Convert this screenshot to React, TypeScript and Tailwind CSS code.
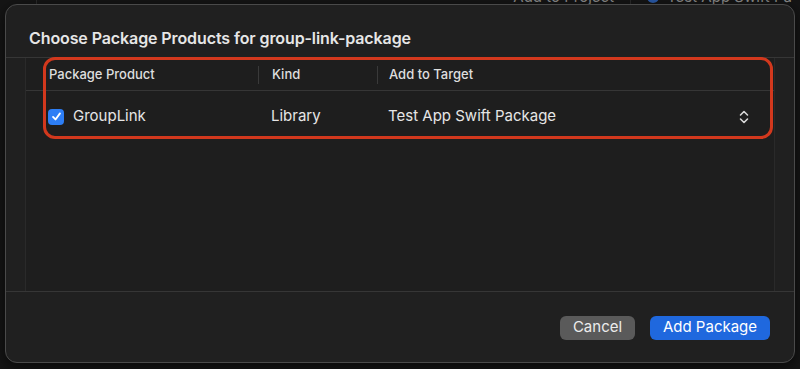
import React from 'react';

const font = { fontFamily: 'Inter, "Noto Sans", "Liberation Sans", sans-serif' };

const UpDownChevron = () => (
    <svg width="10" height="14" viewBox="0 0 10 14" fill="none" stroke="#d8d8d8" strokeWidth="1.6" strokeLinecap="round" strokeLinejoin="round">
        <path d="M1.5 5 L5 1.5 L8.5 5" />
        <path d="M1.5 9 L5 12.5 L8.5 9" />
    </svg>
);

const Checkbox = () => (
    <span className="flex h-4 w-4 items-center justify-center rounded-[4px] bg-[#2d7ef5]">
        <svg width="11" height="11" viewBox="0 0 12 12" fill="none" stroke="white" strokeWidth="2" strokeLinecap="round" strokeLinejoin="round">
            <path d="M2.2 6.4 L4.9 9.2 L9.8 2.6" />
        </svg>
    </span>
);

export default function App() {
    return (
        <div className="relative h-[369px] w-[800px] overflow-hidden bg-[#151515]" style={font}>
            {/* window content peeking behind the sheet */}
            <div className="absolute left-0 top-0 flex h-[6px] w-full overflow-hidden text-[15px] text-[#8a8a8a]">
                <div className="w-[37px] border-r border-[#2a2a2a]" />
                <div className="ml-auto flex items-center gap-4 -mt-[12px] pr-2">
                    <span className="border-r border-[#2a2a2a] pr-4">Add to Project</span>
                    <span className="flex items-center gap-2">
                        <span className="h-3 w-3 rounded-full bg-[#2a5aa8]" />
                        Test App Swift Pa
                    </span>
                </div>
            </div>

            <div className="relative px-[5px] pt-[4px]">
                <div className="flex h-[359px] flex-col rounded-[12px] border border-[#4a4a4a] bg-[#202020] shadow-[0_4px_14px_rgba(0,0,0,0.6)]">
                    <div className="flex h-[52px] items-end pb-[7px] pl-[23px]">
                        <h1 className="text-[16px] font-semibold tracking-[-0.1px] text-[#e6e6e6]">
                            Choose Package Products for group-link-package
                        </h1>
                    </div>

                    <div className="flex flex-1 border-y border-[#363636]">
                        <div className="relative mx-[19px] flex-1 border-x border-[#2a2a2a] bg-[#1e1e1e]">
                            <div className="flex h-[33px] items-center border-b border-[#363636] pt-[1px] text-[13px] font-medium text-[#dedede]">
                                <div className="w-[232px] pl-[23px]">Package Product</div>
                                <div className="h-[18px] w-px bg-[#3a3a3a]" />
                                <div className="w-[118px] pl-[13px]">Kind</div>
                                <div className="h-[18px] w-px bg-[#3a3a3a]" />
                                <div className="pl-[11px]">Add to Target</div>
                            </div>
                            <div className="flex h-[49px] items-center pt-[2px] text-[15px] text-[#e6e6e6]">
                                <div className="flex w-[232px] items-center gap-[9px] pl-[22px]">
                                    <Checkbox />
                                    <span>GroupLink</span>
                                </div>
                                <div className="w-[119px] pl-[13px]">Library</div>
                                <div className="flex flex-1 items-center justify-between pl-[11px] pr-[25px]">
                                    <span>Test App Swift Package</span>
                                    <UpDownChevron />
                                </div>
                            </div>

                            {/* highlight annotation */}
                            <div className="pointer-events-none absolute left-[17px] top-[-1px] h-[82px] w-[730px] rounded-[12px] border-[3px] border-[#d2381d]" />
                        </div>
                    </div>

                    <div className="flex h-[70px] items-center justify-end gap-[15px] pr-[24px] pt-[1px] text-[15px] text-white">
                        <button className="h-[24px] w-[75px] rounded-[6px] bg-[#5a5a5a] text-[#ececec]">Cancel</button>
                        <button className="h-[24px] w-[120px] rounded-[6px] bg-[#1f68de]">Add Package</button>
                    </div>
                </div>
            </div>
        </div>
    );
}
